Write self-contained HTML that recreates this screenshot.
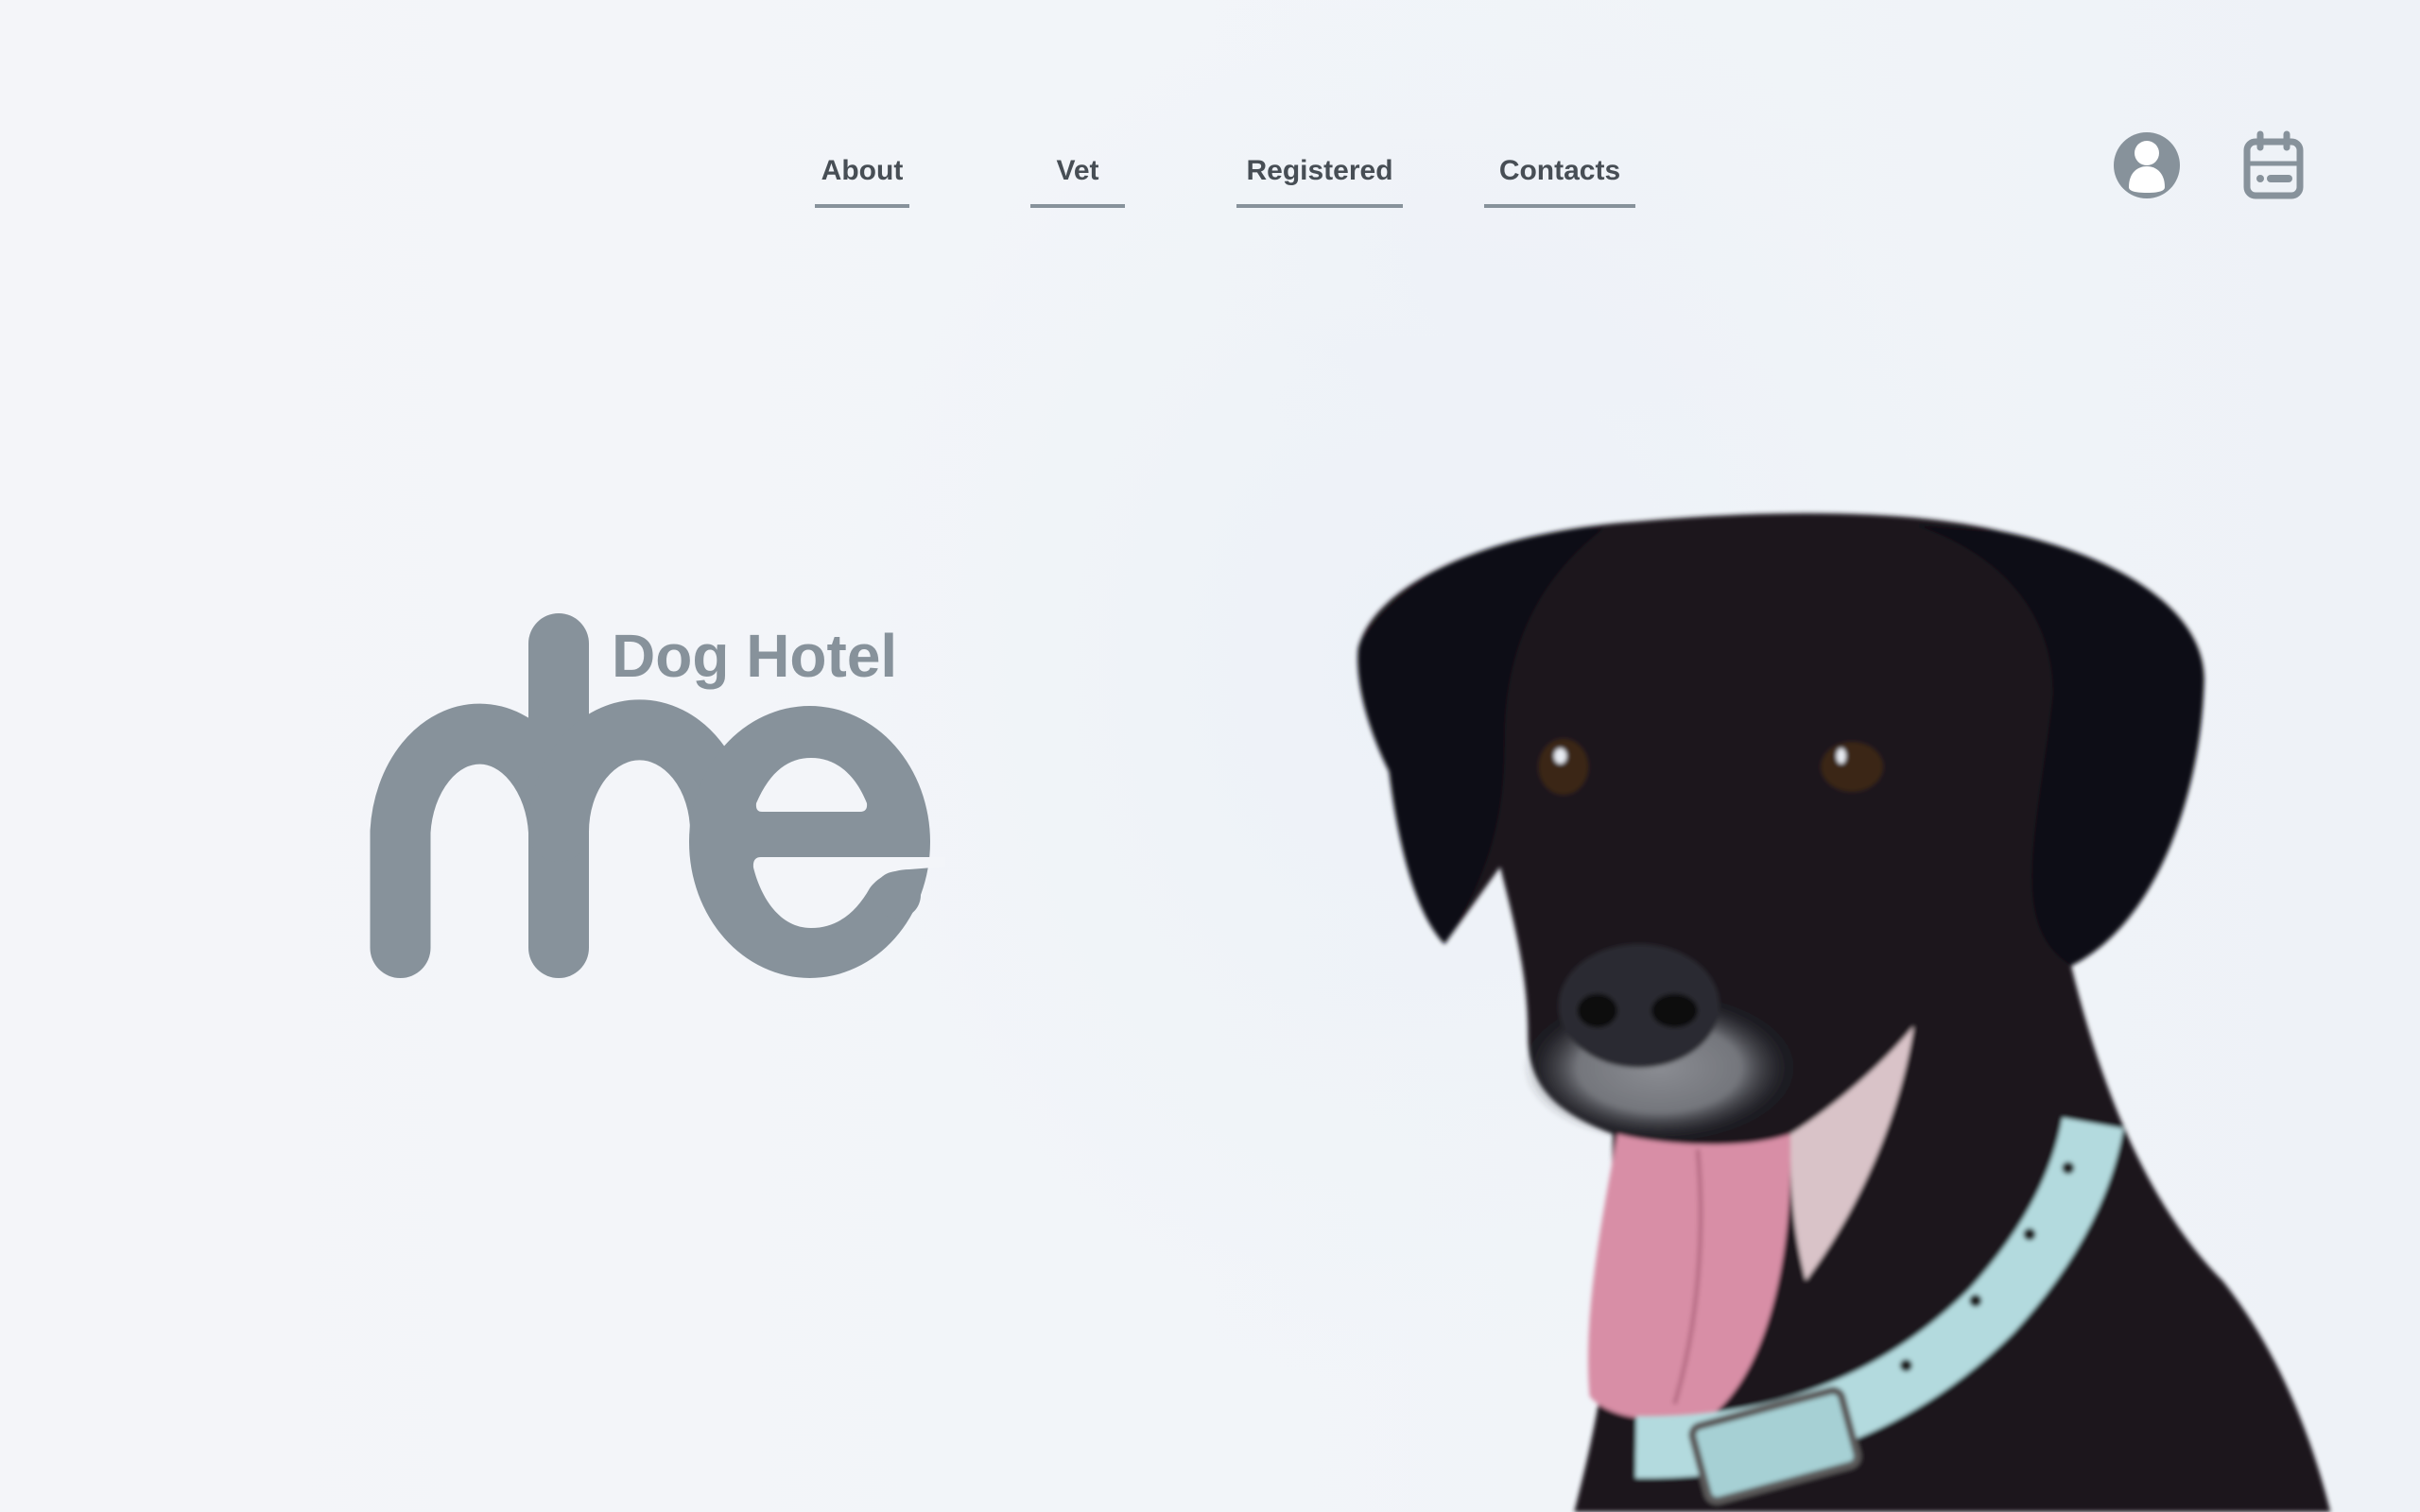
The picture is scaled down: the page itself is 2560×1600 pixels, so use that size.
<!DOCTYPE html>
<html><head><meta charset="utf-8"><style>
html,body{margin:0;padding:0;width:2560px;height:1600px;overflow:hidden}
body{position:relative;background:#f3f5f9;font-family:"Liberation Sans",Arial,sans-serif}
.bg{position:absolute;inset:0;background:
radial-gradient(ellipse 900px 1100px at 1500px 700px, rgba(236,241,247,0.9), rgba(236,241,247,0) 70%),
radial-gradient(ellipse 600px 500px at 1700px 250px, rgba(240,243,248,1), rgba(240,243,248,0) 70%),
linear-gradient(90deg,#f4f5f9 0%,#f2f5f9 50%,#eef2f7 100%)}
.nav{position:absolute;top:161px;font-weight:bold;font-size:30px;color:#474e55;text-align:center}
.nav span{display:block;height:40px;line-height:40px}
.nav i{display:block;height:4px;background:#87929b;margin-top:15px}
</style></head><body>
<div class="bg"></div>

<div class="nav" style="left:862px;width:100px"><span>About</span><i></i></div>
<div class="nav" style="left:1090px;width:100px"><span>Vet</span><i></i></div>
<div class="nav" style="left:1308px;width:176px"><span>Registered</span><i></i></div>
<div class="nav" style="left:1570px;width:160px"><span>Contacts</span><i></i></div>

<svg style="position:absolute;left:0;top:0" width="2560" height="1600" viewBox="0 0 2560 1600">
  <!-- user icon -->
  <circle cx="2271" cy="175" r="35" fill="#87929b"/>
  <circle cx="2271" cy="162" r="13" fill="#fff"/>
  <path d="M2252 198 C2252 182 2262 176 2271 176 C2280 176 2290 182 2290 198 C2290 202 2284 204 2271 204 C2258 204 2252 202 2252 198 Z" fill="#fff"/>
  <!-- calendar icon -->
  <rect x="2377" y="150" width="56" height="57" rx="9" fill="none" stroke="#87929b" stroke-width="7"/>
  <line x1="2391" y1="142" x2="2391" y2="156" stroke="#87929b" stroke-width="7" stroke-linecap="round"/>
  <line x1="2419" y1="142" x2="2419" y2="156" stroke="#87929b" stroke-width="7" stroke-linecap="round"/>
  <line x1="2377" y1="173" x2="2433" y2="173" stroke="#87929b" stroke-width="5"/>
  <circle cx="2391" cy="189" r="4" fill="#87929b"/>
  <line x1="2402" y1="189" x2="2421" y2="189" stroke="#87929b" stroke-width="8" stroke-linecap="round"/>

  <!-- logo -->
  <g fill="none" stroke="#87929b" stroke-width="64" stroke-linecap="round">
    <path d="M423.5 1003 V880 A84 112 0 0 1 591 880"/>
    <path d="M591 681 V1003"/>
    <path d="M591 880 A85 107 0 0 1 762 880"/>
  </g>
  <ellipse cx="856.5" cy="891" rx="127.5" ry="144" fill="#87929b"/>
  <path d="M806 859 Q799 859 800 850 C815 815 835 802 858 802 C885 802 905 820 917 850 Q918 859 910 859 Z" fill="#f3f5f9"/>
  <path d="M805 907 H1000 V917 L962 920 C942 920 927 930 920 940 C906 965 886 982 858 982 C825 982 805 950 797 918 Q796 907 805 907 Z" fill="#f3f5f9"/>
  <circle cx="949" cy="947" r="25" fill="#87929b"/>
  <text x="647" y="716" font-family="Liberation Sans, Arial, sans-serif" font-weight="bold" font-size="64" fill="#87929b">Dog Hotel</text>
</svg>

<!-- dog -->
<svg style="position:absolute;left:0;top:0" width="2560" height="1600" viewBox="0 0 1568 980">
  <defs>
    <radialGradient id="mz" cx="0.5" cy="0.5" r="0.5">
      <stop offset="0" stop-color="#8a8c92"/><stop offset="0.6" stop-color="#74767c"/><stop offset="1" stop-color="#2a2a30" stop-opacity="0"/>
    </radialGradient>
    <filter id="bl"><feGaussianBlur stdDeviation="1.5"/></filter>
  </defs>
  <g filter="url(#bl)">
  <path d="M880 420 C890 380 960 345 1060 338 C1150 330 1240 330 1300 345 C1380 362 1432 400 1428 445 C1425 520 1395 600 1342 626 C1360 700 1390 780 1440 830 C1480 880 1500 940 1510 980 L1020 980 C1030 940 1040 900 1042 850 L1045 735 C1010 722 990 705 990 672 C990 640 985 612 972 562 L936 612 C915 590 905 540 900 500 C885 470 878 440 880 420 Z" fill="#1a191f"/>
  <path d="M1240 340 C1300 360 1330 400 1330 450 C1320 540 1300 600 1342 626 C1395 600 1425 520 1428 445 C1430 400 1380 362 1300 345 Z" fill="#0e0d12"/>
  <path d="M880 420 C900 380 960 345 1040 342 C990 380 975 430 975 480 C975 520 970 560 936 612 C915 590 905 540 900 500 C885 470 878 440 880 420Z" fill="#0f0e13"/>
  <ellipse cx="1075" cy="692" rx="88" ry="48" fill="url(#mz)"/>
  <ellipse cx="1062" cy="652" rx="52" ry="40" fill="#2b2b30"/>
  <ellipse cx="1035" cy="655" rx="13" ry="11" fill="#0a0a0c"/>
  <ellipse cx="1085" cy="655" rx="15" ry="11" fill="#0a0a0c"/>
  <ellipse cx="1013" cy="497" rx="16" ry="18" fill="#3a2519"/>
  <ellipse cx="1200" cy="497" rx="20" ry="16" fill="#3a2519"/>
  <ellipse cx="1011" cy="490" rx="4" ry="5" fill="#e8ecf3"/>
  <ellipse cx="1193" cy="490" rx="3" ry="5" fill="#e8ecf3"/>
  <path d="M1160 735 C1185 720 1220 690 1240 665 C1230 730 1200 790 1170 830 C1160 790 1160 760 1160 735Z" fill="#d9c3c8"/>
  <path d="M1048 735 C1075 742 1130 746 1160 735 C1162 800 1150 880 1112 915 C1080 925 1042 920 1030 905 C1025 850 1040 780 1048 735Z" fill="#d88ea6"/>
  <path d="M1100 745 C1105 800 1100 860 1085 910" stroke="#b86e86" stroke-width="3" fill="none"/>
  <path d="M1060 938 Q1200 940 1290 850 Q1345 790 1356 728" stroke="#b3dade" stroke-width="40" fill="none"/>
  <rect x="1100" y="912" width="100" height="50" rx="6" fill="#a6d0d4" stroke="#5b5a5a" stroke-width="5" transform="rotate(-15 1150 937)"/>
  <circle cx="1235" cy="885" r="4" fill="#222"/><circle cx="1280" cy="843" r="4" fill="#222"/><circle cx="1315" cy="800" r="4" fill="#222"/><circle cx="1340" cy="757" r="4" fill="#222"/>
  </g>
</svg>
</body></html>
